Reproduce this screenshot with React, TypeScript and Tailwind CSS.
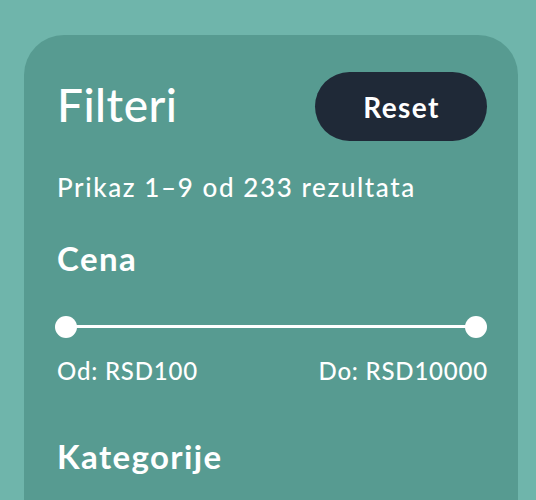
export default function App() {
  return (
    <div
      className="min-h-[500px] bg-[#6fb5ab] pt-[35px] pl-[24px] pr-[18px] overflow-hidden"
      style={{ fontFamily: "Lato, 'Noto Sans', sans-serif" }}
    >
      <div className="h-[480px] rounded-t-[40px] bg-[#579b91] pl-[33px] pr-[31px] pt-[37px] text-white">
        <div className="flex items-start justify-between">
          <h1 className="mt-[10px] text-[46px] font-medium leading-none tracking-[0.5px]">Filteri</h1>
          <button className="h-[69px] w-[172px] rounded-full bg-[#1f2937] pl-[1px] text-[28px] font-bold leading-none tracking-[1.4px] text-white">
            Reset
          </button>
        </div>
        <p className="mt-[33px] text-[26px] font-medium leading-none tracking-[1.6px]">Prikaz 1–9 od 233 rezultata</p>
        <h2 className="mt-[42px] text-[33px] font-bold leading-none tracking-[1.4px]">Cena</h2>
        <div className="relative mt-[41px] -ml-[2px] h-[22px]">
          <div className="absolute left-[11px] right-[11px] top-[9px] h-[3px] bg-white" />
          <div className="absolute left-0 top-0 h-[22px] w-[22px] rounded-full bg-white" />
          <div className="absolute right-0 top-0 h-[22px] w-[22px] rounded-full bg-white" />
        </div>
        <div className="mt-[21px] flex justify-between text-[24px] font-medium leading-none tracking-[0.8px]">
          <span>Od: RSD100</span>
          <span className="-mr-[1px]">Do: RSD10000</span>
        </div>
        <h2 className="mt-[57px] text-[33px] font-bold leading-none tracking-[1.4px]">Kategorije</h2>
      </div>
    </div>
  );
}
